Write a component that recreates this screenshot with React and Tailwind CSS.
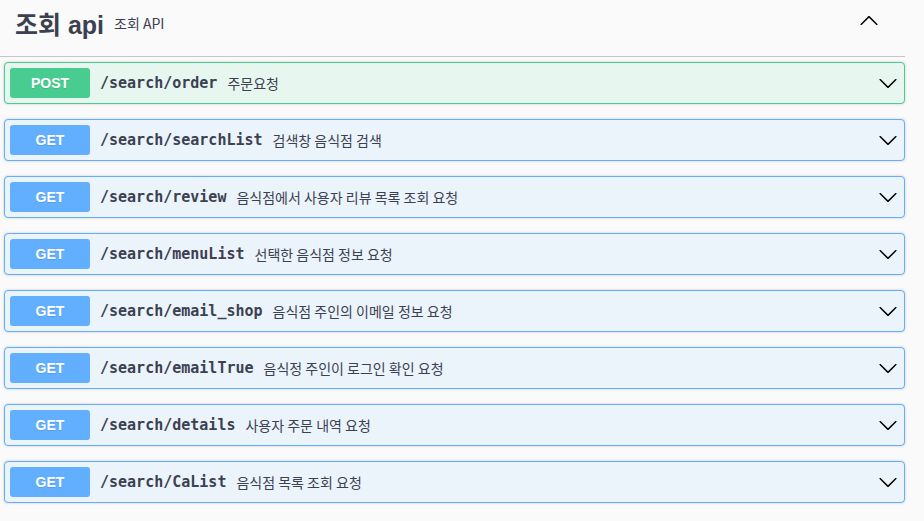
const ops = [
  { method: "POST", path: "/search/order", desc: "주문요청" },
  { method: "GET", path: "/search/searchList", desc: "검색창 음식점 검색" },
  { method: "GET", path: "/search/review", desc: "음식점에서 사용자 리뷰 목록 조회 요청" },
  { method: "GET", path: "/search/menuList", desc: "선택한 음식점 정보 요청" },
  { method: "GET", path: "/search/email_shop", desc: "음식점 주인의 이메일 정보 요청" },
  { method: "GET", path: "/search/emailTrue", desc: "음식정 주인이 로그인 확인 요청" },
  { method: "GET", path: "/search/details", desc: "사용자 주문 내역 요청" },
  { method: "GET", path: "/search/CaList", desc: "음식점 목록 조회 요청" },
];

const Arrow = ({ up }) => (
  <svg width="20" height="20" viewBox="0 0 20 20" className={up ? "rotate-180" : ""} fill="#000">
    <path d="M17.418 6.109c.272-.268.709-.268.979 0s.271.701 0 .969l-7.908 7.83c-.27.268-.707.268-.979 0l-7.908-7.83c-.27-.268-.27-.701 0-.969.271-.268.709-.268.979 0L10 13.25l7.418-7.141z" />
  </svg>
);

const sans = "font-['Liberation_Sans','Noto_Sans_CJK_KR',sans-serif]";
const kr = "font-['Noto_Sans_CJK_KR','Liberation_Sans',sans-serif]";

const OpBlock = ({ method, path, desc }) => {
  const post = method === "POST";
  return (
    <div
      className={`mb-[15px] ml-[4px] rounded-[4px] border shadow-[0_0_3px_rgba(0,0,0,0.19)] ${
        post ? "border-[#49cc90] bg-[#e8f6f0]" : "border-[#61affe] bg-[#ebf3fb]"
      }`}
    >
      <div className="flex items-center p-[5px]">
        <span
          className={`w-[80px] h-[30px] flex items-center justify-center rounded-[3px] text-white text-[14px] font-bold [text-shadow:0_1px_0_rgba(0,0,0,0.1)] ${sans} ${
            post ? "bg-[#49cc90]" : "bg-[#61affe]"
          }`}
        >
          {method}
        </span>
        <span className="px-[10px] text-[15px] font-bold text-[#3b4151] font-['DejaVu_Sans_Mono',monospace]">
          {path}
        </span>
        <span className={`flex-1 text-[14px] text-[#3b4151] ${kr}`}>{desc}</span>
        <span className="mr-[1px] flex items-center">
          <Arrow />
        </span>
      </div>
    </div>
  );
};

export default function App() {
  return (
    <div className="min-h-[521px] bg-[#fafafa]">
      <div className="w-[905px]">
        <div className="flex items-center h-[57px] pl-[15px] pr-[26px] border-b border-[#c4c6cb] mb-[5px] text-[#3b4151]">
          <span className={`mb-[5px] text-[25px] font-bold ${sans}`}>조회 api</span>
          <span className={`ml-[10px] mb-[9px] text-[14px] flex-1 ${kr}`}>조회 API</span>
          <span className="mb-[14px] flex">
            <Arrow up />
          </span>
        </div>
        {ops.map((o) => (
          <OpBlock key={o.path} {...o} />
        ))}
      </div>
    </div>
  );
}
